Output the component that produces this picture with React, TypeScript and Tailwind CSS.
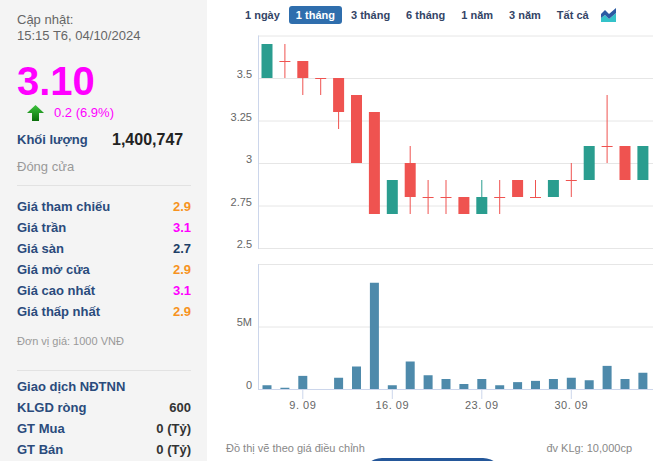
import React from "react";

type Candle = [number, number, number, number]; // open, close, high, low

const candles: Candle[] = [
  [3.5, 3.7, 3.7, 3.5],
  [3.6, 3.6, 3.7, 3.5],
  [3.6, 3.5, 3.6, 3.4],
  [3.5, 3.5, 3.5, 3.4],
  [3.5, 3.3, 3.5, 3.2],
  [3.4, 3.0, 3.4, 3.0],
  [3.3, 2.7, 3.3, 2.7],
  [2.7, 2.9, 2.9, 2.7],
  [3.0, 2.8, 3.1, 2.7],
  [2.8, 2.8, 2.9, 2.7],
  [2.8, 2.8, 2.9, 2.7],
  [2.8, 2.7, 2.8, 2.7],
  [2.7, 2.8, 2.9, 2.7],
  [2.8, 2.8, 2.9, 2.7],
  [2.9, 2.8, 2.9, 2.8],
  [2.8, 2.8, 2.9, 2.8],
  [2.8, 2.9, 2.9, 2.8],
  [2.9, 2.9, 3.0, 2.8],
  [2.9, 3.1, 3.1, 2.9],
  [3.1, 3.1, 3.4, 3.0],
  [3.1, 2.9, 3.1, 2.9],
  [2.9, 3.1, 3.1, 2.9],
];

const volumes = [0.3, 0.1, 1.05, 0, 0.9, 1.8, 8.5, 0.3, 2.2, 1.1, 0.8, 0.4, 0.8, 0.3, 0.55, 0.65, 0.8, 0.9, 0.7, 1.85, 0.8, 1.3];

const GREEN = "#2a9d8f";
const RED = "#ef5350";

// local chart coords: page x - 207, page y - 30
const cx = (i: number) => 267 + i * 17.9 - 207;
const py = (p: number) => 78 + (3.5 - p) * 170 - 30;
const vy = (v: number) => 389 - v * 12.5 - 30;

const ranges = ["1 ngày", "1 tháng", "3 tháng", "6 tháng", "1 năm", "3 năm", "Tất cả"];

const stats = [
  { label: "Giá tham chiếu", value: "2.9", color: "text-[#f7931e]" },
  { label: "Giá trần", value: "3.1", color: "text-[#ff00ff]" },
  { label: "Giá sàn", value: "2.7", color: "text-[#1e3f66]" },
  { label: "Giá mở cửa", value: "2.9", color: "text-[#f7931e]" },
  { label: "Giá cao nhất", value: "3.1", color: "text-[#ff00ff]" },
  { label: "Giá thấp nhất", value: "2.9", color: "text-[#f7931e]" },
];

const foreign = [
  { label: "KLGD ròng", value: "600" },
  { label: "GT Mua", value: "0 (Tỷ)" },
  { label: "GT Bán", value: "0 (Tỷ)" },
];

const PriceChart: React.FC = () => {
  const left = 51;
  const right = 446;
  const priceGrid = [3.75, 3.5, 3.25, 3, 2.75, 2.5];
  const priceLabels: [number, string][] = [[3.5, "3.5"], [3.25, "3.25"], [3, "3"], [2.75, "2.75"], [2.5, "2.5"]];
  const xLabels: [number, string][] = [[2, "9. 09"], [7, "16. 09"], [12, "23. 09"], [17, "30. 09"]];

  return (
    <svg width={463} height={411} className="block shrink-0" style={{ fontFamily: '"Liberation Sans", Arial, sans-serif' }}>
      {/* price grid */}
      {priceGrid.map((p) => (
        <line key={p} x1={left} x2={right} y1={py(p) + 0.5} y2={py(p) + 0.5} stroke="#e6e6e6" />
      ))}
      {priceLabels.map(([p, t]) => (
        <text key={t} x={45} y={py(p)} textAnchor="end" fontSize={11} fill="#666">
          {t}
        </text>
      ))}
      <line x1={left + 0.5} x2={left + 0.5} y1={py(3.75)} y2={py(2.5) + 1} stroke="#ccd6eb" />

      {/* candles */}
      {candles.map(([o, c, h, l], i) => {
        const x = cx(i);
        const up = c > o;
        const col = up ? GREEN : RED;
        if (o === c) {
          return (
            <g key={i} stroke={col}>
              <line x1={x} x2={x} y1={py(h)} y2={py(l)} />
              <line x1={x - 5.5} x2={x + 5.5} y1={py(o) + 0.5} y2={py(o) + 0.5} />
            </g>
          );
        }
        const top = py(Math.max(o, c));
        const bot = py(Math.min(o, c));
        return (
          <g key={i}>
            <line x1={x} x2={x} y1={py(h)} y2={py(l)} stroke={col} />
            <rect x={x - 5.5} y={top} width={11} height={bot - top} fill={col} />
          </g>
        );
      })}

      {/* volume panel */}
      {[10, 5, 0].map((v) => (
        <line key={v} x1={left} x2={right} y1={vy(v) + 0.5} y2={vy(v) + 0.5} stroke={v === 0 ? "#ccd6eb" : "#e6e6e6"} />
      ))}
      <text x={45} y={vy(5) - 1} textAnchor="end" fontSize={11} fill="#666">5M</text>
      <text x={45} y={vy(0)} textAnchor="end" fontSize={11} fill="#666">0</text>
      <line x1={left + 0.5} x2={left + 0.5} y1={vy(10)} y2={vy(0) + 1} stroke="#ccd6eb" />
      {volumes.map((v, i) =>
        v > 0 ? <rect key={i} x={cx(i) - 4.5} y={vy(v)} width={9} height={vy(0) - vy(v)} fill="#4e8aab" /> : null
      )}
      {xLabels.map(([i, t]) => (
        <g key={t}>
          <line x1={cx(i)} x2={cx(i)} y1={vy(0)} y2={vy(0) + 10} stroke="#ccd6eb" />
          <text x={cx(i)} y={vy(0) + 20} textAnchor="middle" fontSize={11} fill="#666" letterSpacing="0.5">
            {t}
          </text>
        </g>
      ))}
    </svg>
  );
};

const App: React.FC = () => {
  return (
    <div className="flex w-[670px] h-[461px] overflow-hidden bg-white font-['Liberation_Sans',Arial,sans-serif]">
      {/* Left info panel */}
      <aside className="w-[207px] shrink-0 bg-[#f4f4f4] pl-[17px] pr-[16px] pt-[12px]">
        <div className="text-[13px] leading-[16px] text-[#666]">Cập nhật:</div>
        <div className="text-[13px] leading-[16px] text-[#666]">15:15 T6, 04/10/2024</div>
        <div className="mt-[17px] text-[40px] leading-[40px] font-bold text-[#ff00ff]">3.10</div>
        <div className="mt-[4px] flex items-center h-[16px] pl-[10px]">
          <svg width="17" height="16" viewBox="0 0 17 16">
            <defs>
              <linearGradient id="ga" x1="0" y1="0" x2="0" y2="1">
                <stop offset="0" stopColor="#3cc33c" />
                <stop offset="1" stopColor="#0b6e0b" />
              </linearGradient>
            </defs>
            <polygon points="8.5,0 17,8 12,8 12,16 5,16 5,8 0,8" fill="url(#ga)" />
          </svg>
          <span className="ml-[10px] text-[13px] text-[#ff00ff]">0.2 (6.9%)</span>
        </div>
        <div className="mt-[9px] flex items-center h-[20px]">
          <span className="w-[95px] text-[13px] font-bold text-[#2a4b7c]">Khối lượng</span>
          <span className="text-[16px] font-bold text-[#222]">1,400,747</span>
        </div>
        <div className="mt-[9px] text-[13px] leading-[16px] text-[#999]">Đóng cửa</div>
        <div className="mt-[10px] border-b border-[#e2e2e2]" />
        <div className="mt-[10px]">
          {stats.map((s) => (
            <div key={s.label} className="flex justify-between items-center h-[21px] text-[13px] font-bold">
              <span className="text-[#2a4b7c]">{s.label}</span>
              <span className={s.color}>{s.value}</span>
            </div>
          ))}
        </div>
        <div className="mt-[12px] text-[11px] leading-[14px] text-[#999]">Đơn vị giá: 1000 VNĐ</div>
        <div className="mt-[22px] border-b border-[#e2e2e2]" />
        <div className="mt-[5px] flex items-center h-[21px] text-[13px] font-bold text-[#2a4b7c]">Giao dịch NĐTNN</div>
        {foreign.map((f) => (
          <div key={f.label} className="flex justify-between items-center h-[21px] text-[13px] font-bold">
            <span className="text-[#2a4b7c]">{f.label}</span>
            <span className="text-[#333]">{f.value}</span>
          </div>
        ))}
      </aside>

      {/* Chart area */}
      <main className="flex-1 flex flex-col">
        <div className="h-[30px] shrink-0 flex items-center pl-[31px] gap-[2px]">
          {ranges.map((r) => (
            <button
              key={r}
              className={`px-[7px] h-[18px] rounded-[3px] text-[11px] font-bold leading-[18px] ${
                r === "1 tháng" ? "bg-[#2f6ead] text-white" : "text-[#334466]"
              }`}
            >
              {r}
            </button>
          ))}
          <svg width="15" height="14" viewBox="0 0 15 14" className="ml-[3px] mb-[1px]">
            <polygon points="0,10 4,7 8,11 15,5 15,14 0,14" fill="#34c2c9" />
            <polygon points="0,6 4,2 8,6 15,0 15,5 8,11 4,7 0,10" fill="#2b5aa3" />
          </svg>
        </div>
        <PriceChart />
        <div className="flex shrink-0 justify-between h-[14px] items-center pl-[19px] pr-[38px] text-[11px] text-[#888]">
          <span>Đồ thị vẽ theo giá điều chỉnh</span>
          <span>đv KLg: 10,000cp</span>
        </div>
        <div className="mt-[3px] shrink-0 ml-[155px] w-[141px] h-[20px] rounded-t-[20px] bg-[#24579a]" />
      </main>
    </div>
  );
};

export default App;
